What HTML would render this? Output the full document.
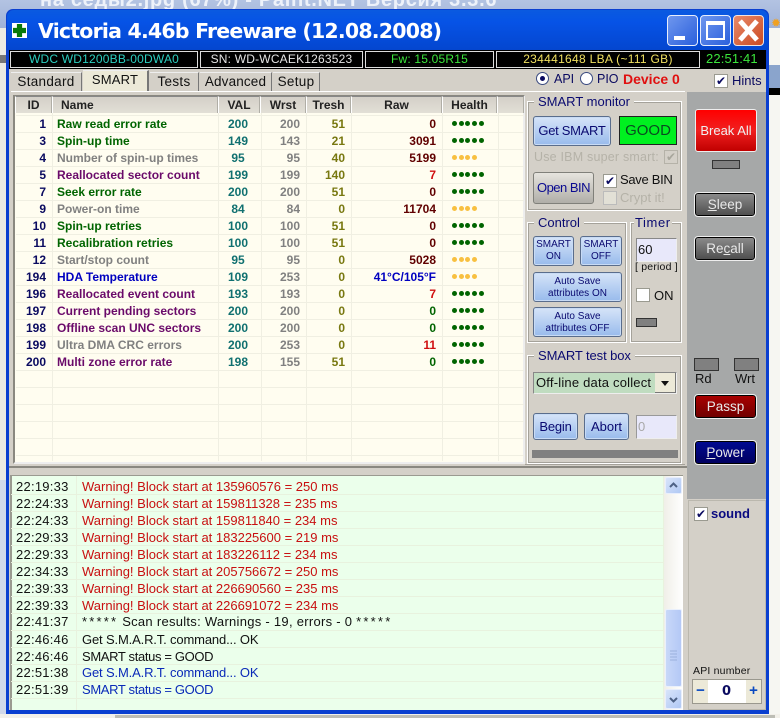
<!DOCTYPE html>
<html><head><meta charset="utf-8"><style>
*{box-sizing:border-box}
html,body{margin:0;padding:0;width:780px;height:718px;overflow:hidden;background:#f2f0ea;font-family:"Liberation Sans",sans-serif}
div,span.a{position:absolute}
.t{position:absolute;white-space:nowrap}
.info{top:51px;height:17px;background:#000;border:1px solid #ddd;font-size:12px;line-height:15px;text-align:center;letter-spacing:.2px}
.tab{top:72px;height:19px;background:#d4d0c8;border-right:1px solid #777;border-top:1px solid #eee;font-size:13.5px;line-height:18px;text-align:center;color:#111;letter-spacing:.3px}
.hc{top:96px;height:17px;background:linear-gradient(#d4d0c8,#e2dfd6);border-right:1px solid #b0aea6;border-left:1px solid #fff;border-top:1px solid #888;font:bold 12px/17px "Liberation Sans",sans-serif;color:#222;text-align:center}
.vl{top:113px;width:1px;height:348px;background:#f0efe2}
.hl{left:16px;width:508px;height:1px;background:#f0efe2}
.r{height:14px;font:bold 12px/14px "Liberation Sans",sans-serif;white-space:nowrap}
.id{left:14px;width:32px;text-align:right;color:#0a0a60}
.nm{left:57px}
.val{left:219px;width:38px;text-align:center;color:#107070}
.wr{left:260px;width:40px;text-align:right;color:#808080}
.tr{left:306px;width:39px;text-align:right;color:#787810}
.rw{left:352px;width:84px;text-align:right;color:#600000}
.hg{left:452px;letter-spacing:0;font:bold 11px/14px "DejaVu Sans",sans-serif}
.d{display:inline-block;width:5px;height:5px;border-radius:50%;margin-right:1.7px;vertical-align:1px}
.g .d{background:#006400}.y .d{background:#f8c040}
.grp{border:1px solid #fff;outline:1px solid #a5a29a;outline-offset:-2px}
.lbl{position:absolute;background:#d4d0c8;color:#0a0a70;font-size:13px;padding:0 4px;white-space:nowrap}
.bb{border:1px solid #5a6d8c;border-radius:3px;background:linear-gradient(#d6e4f8,#98bbec);color:#0a0a70;text-align:center;white-space:nowrap;box-shadow:inset 0 0 0 1px #c8dbf5}
.gb{border:1px solid #000;border-radius:3px;outline:1px solid #eee;background:linear-gradient(#8a8a8a,#4f4f4f);color:#e8e8e8;text-align:center;font-size:13.5px;line-height:28px}
.cb{width:14px;height:14px;background:#fff;border:1px solid #9a9a90;color:#0a0a60;font:bold 12px/12px "DejaVu Sans",sans-serif;text-align:center}
.led{background:#808080;border:1px solid #333}
.lt{left:16px;font-size:13px;line-height:16px;color:#111;letter-spacing:.25px;white-space:nowrap}
.lm{left:82px;font-size:13px;line-height:16px;white-space:nowrap}
.ll{left:11px;width:652px;height:1px;background:#e8f2de}
</style></head><body>
<!-- background desktop -->
<div style="left:0;top:0;width:780px;height:28px;background:linear-gradient(#b3c3e2,#9fb2d8)"></div>
<div class="t" style="left:40px;top:-11px;font-size:20px;font-weight:bold;color:#eef2fa;letter-spacing:.7px;font-family:'Liberation Sans','Noto Sans CJK SC',sans-serif">на седы2.jpg (67%) - Paint.NET Версия 3.3.6</div>
<div style="left:0;top:28px;width:7px;height:690px;background:#ecebe3"></div>
<div style="left:0;top:55px;width:7px;height:8px;background:#777"></div>
<div style="left:0;top:480px;width:7px;height:238px;background:#d0d8ea"></div>
<div style="left:769px;top:28px;width:11px;height:690px;background:#f6f6f2"></div>
<div style="left:769px;top:65px;width:11px;height:23px;background:#8aa4cc"></div>
<div style="left:769px;top:88px;width:11px;height:7px;background:#000"></div>
<div class="t" style="left:771px;top:16px;color:#f0a020;font-size:12px">✹</div>
<div style="left:0;top:714px;width:780px;height:4px;background:#f2f0ea"></div>
<div style="left:115px;top:715px;width:660px;height:3px;background:#bdbdb5"></div>

<!-- window -->
<div style="left:6px;top:9px;width:763px;height:705px;background:#0a3fd0;border-radius:7px 7px 0 0"></div>
<div style="left:7px;top:10px;width:761px;height:40px;background:linear-gradient(#0a5ae0,#0653e6 30%,#0446cf);border-radius:7px 7px 0 0"></div>
<div style="left:12px;top:23px;width:15px;height:15px;background:#fff"></div>
<div style="left:13px;top:24px;width:13px;height:13px;background:#0a7a0a;clip-path:polygon(30% 0,70% 0,70% 30%,100% 30%,100% 70%,70% 70%,70% 100%,30% 100%,30% 70%,0 70%,0 30%,30% 30%)"></div>
<div class="t" id="title" style="left:38px;top:17px;font:bold 20.5px/28px 'DejaVu Sans',sans-serif;color:#fff;letter-spacing:-.8px">Victoria 4.46b Freeware (12.08.2008)</div>
<!-- window buttons -->
<div style="left:667px;top:15px;width:31px;height:31px;background:linear-gradient(135deg,#6f97ee,#2a5fdc);border:1px solid #e8eefc;border-radius:4px"></div>
<div style="left:674px;top:36px;width:11px;height:4px;background:#fff"></div>
<div style="left:700px;top:15px;width:31px;height:31px;background:linear-gradient(135deg,#6f97ee,#2a5fdc);border:1px solid #e8eefc;border-radius:4px"></div>
<div style="left:706px;top:21px;width:19px;height:19px;border:2px solid #fff;border-top-width:4px"></div>
<div style="left:733px;top:15px;width:31px;height:31px;background:linear-gradient(135deg,#e88a6a,#cc4a22);border:1px solid #f0e4e0;border-radius:4px"></div>
<svg style="position:absolute;left:733px;top:15px" width="31" height="31"><path d="M7 6L24 25M24 6L7 25" stroke="#fff" stroke-width="5"/></svg>

<!-- main area -->
<div style="left:9px;top:50px;width:757px;height:660px;background:#d4d0c8"></div>
<div style="left:9px;top:50px;width:757px;height:19px;background:#000"></div>
<div class="info" style="left:10px;width:188px;color:#2ccfc0">WDC WD1200BB-00DWA0</div>
<div class="info" style="left:200px;width:163px;color:#e4e4e4">SN: WD-WCAEK1263523</div>
<div class="info" style="left:365px;width:129px;color:#3ce63c">Fw: 15.05R15</div>
<div class="info" style="left:496px;width:204px;color:#f0e060;letter-spacing:.3px">234441648 LBA (~111 GB)</div>
<div class="t" style="left:706px;top:51px;font-size:13px;line-height:16px;color:#3ce63c;letter-spacing:.15px">22:51:41</div>

<!-- tabs -->
<div class="tab" style="left:11px;width:71px">Standard</div>
<div class="tab" style="left:83px;top:70px;height:21px;width:66px;background:#ece9d8;line-height:18px;color:#111;border-right:2px solid #777;font-size:13px;letter-spacing:.2px">SMART</div>
<div class="tab" style="left:150px;width:49px">Tests</div>
<div class="tab" style="left:200px;width:72px;letter-spacing:.15px">Advanced</div>
<div class="tab" style="left:273px;width:47px">Setup</div>
<div style="left:11px;top:91px;width:674px;height:1px;background:#fff"></div>
<!-- radio row -->
<div style="left:536px;top:72px;width:13px;height:13px;border-radius:50%;background:#fff;border:1px solid #3a4a80"></div>
<div style="left:540px;top:76px;width:5px;height:5px;border-radius:50%;background:#0a0a60"></div>
<div class="t" style="left:554px;top:71px;font-size:12.5px;line-height:16px;color:#0a0a60">API</div>
<div style="left:580px;top:72px;width:13px;height:13px;border-radius:50%;background:#fff;border:1px solid #3a4a80"></div>
<div class="t" style="left:597px;top:71px;font-size:12.5px;line-height:16px;color:#0a0a60">PIO</div>
<div class="t" style="left:623px;top:70px;font-size:14px;line-height:18px;font-weight:bold;color:#e01010">Device 0</div>
<div class="cb" style="left:714px;top:74px">✔</div>
<div class="t" style="left:732px;top:73px;font-size:13px;line-height:16px;color:#0a0a60">Hints</div>

<!-- table -->
<div style="left:13px;top:95px;width:512px;height:369px;background:#fffdf0;border:2px solid #8a8880;border-bottom-color:#eee;border-right-color:#eee"></div>
<div class="hc" style="left:15px;width:37px">ID</div>
<div class="hc" style="left:52px;width:166px;text-align:left;padding-left:8px">Name</div>
<div class="hc" style="left:218px;width:42px">VAL</div>
<div class="hc" style="left:260px;width:46px">Wrst</div>
<div class="hc" style="left:306px;width:45px">Tresh</div>
<div class="hc" style="left:351px;width:91px">Raw</div>
<div class="hc" style="left:442px;width:55px">Health</div>
<div class="hc" style="left:497px;width:27px"></div>
<div class="vl" style="left:52px"></div><div class="vl" style="left:218px"></div><div class="vl" style="left:261px"></div><div class="vl" style="left:306px"></div><div class="vl" style="left:351px"></div><div class="vl" style="left:442px"></div><div class="vl" style="left:498px"></div>
<div class="hl" style="top:115px"></div><div class="hl" style="top:132px"></div><div class="hl" style="top:149px"></div><div class="hl" style="top:166px"></div><div class="hl" style="top:183px"></div><div class="hl" style="top:200px"></div><div class="hl" style="top:217px"></div><div class="hl" style="top:234px"></div><div class="hl" style="top:251px"></div><div class="hl" style="top:268px"></div><div class="hl" style="top:285px"></div><div class="hl" style="top:302px"></div><div class="hl" style="top:319px"></div><div class="hl" style="top:336px"></div><div class="hl" style="top:353px"></div><div class="hl" style="top:370px"></div><div class="hl" style="top:387px"></div><div class="hl" style="top:404px"></div><div class="hl" style="top:421px"></div><div class="hl" style="top:438px"></div><div class="hl" style="top:455px"></div>

<div class="r id" style="top:117px">1</div><div class="r nm" style="top:117px;color:#006400">Raw read error rate</div><div class="r val" style="top:117px">200</div><div class="r wr" style="top:117px">200</div><div class="r tr" style="top:117px">51</div><div class="r rw" style="top:117px">0</div><div class="r hg g" style="top:117px"><i class="d"></i><i class="d"></i><i class="d"></i><i class="d"></i><i class="d"></i></div>
<div class="r id" style="top:134px">3</div><div class="r nm" style="top:134px;color:#006400">Spin-up time</div><div class="r val" style="top:134px">149</div><div class="r wr" style="top:134px">143</div><div class="r tr" style="top:134px">21</div><div class="r rw" style="top:134px">3091</div><div class="r hg g" style="top:134px"><i class="d"></i><i class="d"></i><i class="d"></i><i class="d"></i><i class="d"></i></div>
<div class="r id" style="top:151px">4</div><div class="r nm" style="top:151px;color:#808080">Number of spin-up times</div><div class="r val" style="top:151px">95</div><div class="r wr" style="top:151px">95</div><div class="r tr" style="top:151px">40</div><div class="r rw" style="top:151px">5199</div><div class="r hg y" style="top:151px"><i class="d"></i><i class="d"></i><i class="d"></i><i class="d"></i></div>
<div class="r id" style="top:168px">5</div><div class="r nm" style="top:168px;color:#6a0a6a">Reallocated sector count</div><div class="r val" style="top:168px">199</div><div class="r wr" style="top:168px">199</div><div class="r tr" style="top:168px">140</div><div class="r rw" style="top:168px;color:#d01010">7</div><div class="r hg g" style="top:168px"><i class="d"></i><i class="d"></i><i class="d"></i><i class="d"></i><i class="d"></i></div>
<div class="r id" style="top:185px">7</div><div class="r nm" style="top:185px;color:#006400">Seek error rate</div><div class="r val" style="top:185px">200</div><div class="r wr" style="top:185px">200</div><div class="r tr" style="top:185px">51</div><div class="r rw" style="top:185px">0</div><div class="r hg g" style="top:185px"><i class="d"></i><i class="d"></i><i class="d"></i><i class="d"></i><i class="d"></i></div>
<div class="r id" style="top:202px">9</div><div class="r nm" style="top:202px;color:#808080">Power-on time</div><div class="r val" style="top:202px">84</div><div class="r wr" style="top:202px">84</div><div class="r tr" style="top:202px">0</div><div class="r rw" style="top:202px">11704</div><div class="r hg y" style="top:202px"><i class="d"></i><i class="d"></i><i class="d"></i><i class="d"></i></div>
<div class="r id" style="top:219px">10</div><div class="r nm" style="top:219px;color:#006400">Spin-up retries</div><div class="r val" style="top:219px">100</div><div class="r wr" style="top:219px">100</div><div class="r tr" style="top:219px">51</div><div class="r rw" style="top:219px">0</div><div class="r hg g" style="top:219px"><i class="d"></i><i class="d"></i><i class="d"></i><i class="d"></i><i class="d"></i></div>
<div class="r id" style="top:236px">11</div><div class="r nm" style="top:236px;color:#006400">Recalibration retries</div><div class="r val" style="top:236px">100</div><div class="r wr" style="top:236px">100</div><div class="r tr" style="top:236px">51</div><div class="r rw" style="top:236px">0</div><div class="r hg g" style="top:236px"><i class="d"></i><i class="d"></i><i class="d"></i><i class="d"></i><i class="d"></i></div>
<div class="r id" style="top:253px">12</div><div class="r nm" style="top:253px;color:#808080">Start/stop count</div><div class="r val" style="top:253px">95</div><div class="r wr" style="top:253px">95</div><div class="r tr" style="top:253px">0</div><div class="r rw" style="top:253px">5028</div><div class="r hg y" style="top:253px"><i class="d"></i><i class="d"></i><i class="d"></i><i class="d"></i></div>
<div class="r id" style="top:270px">194</div><div class="r nm" style="top:270px;color:#0000c0">HDA Temperature</div><div class="r val" style="top:270px">109</div><div class="r wr" style="top:270px">253</div><div class="r tr" style="top:270px">0</div><div class="r rw" style="top:270px;color:#0000c0">41°C/105°F</div><div class="r hg y" style="top:270px"><i class="d"></i><i class="d"></i><i class="d"></i><i class="d"></i></div>
<div class="r id" style="top:287px">196</div><div class="r nm" style="top:287px;color:#6a0a6a">Reallocated event count</div><div class="r val" style="top:287px">193</div><div class="r wr" style="top:287px">193</div><div class="r tr" style="top:287px">0</div><div class="r rw" style="top:287px;color:#d01010">7</div><div class="r hg g" style="top:287px"><i class="d"></i><i class="d"></i><i class="d"></i><i class="d"></i><i class="d"></i></div>
<div class="r id" style="top:304px">197</div><div class="r nm" style="top:304px;color:#6a0a6a">Current pending sectors</div><div class="r val" style="top:304px">200</div><div class="r wr" style="top:304px">200</div><div class="r tr" style="top:304px">0</div><div class="r rw" style="top:304px;color:#006400">0</div><div class="r hg g" style="top:304px"><i class="d"></i><i class="d"></i><i class="d"></i><i class="d"></i><i class="d"></i></div>
<div class="r id" style="top:321px">198</div><div class="r nm" style="top:321px;color:#6a0a6a">Offline scan UNC sectors</div><div class="r val" style="top:321px">200</div><div class="r wr" style="top:321px">200</div><div class="r tr" style="top:321px">0</div><div class="r rw" style="top:321px;color:#006400">0</div><div class="r hg g" style="top:321px"><i class="d"></i><i class="d"></i><i class="d"></i><i class="d"></i><i class="d"></i></div>
<div class="r id" style="top:338px">199</div><div class="r nm" style="top:338px;color:#808080">Ultra DMA CRC errors</div><div class="r val" style="top:338px">200</div><div class="r wr" style="top:338px">253</div><div class="r tr" style="top:338px">0</div><div class="r rw" style="top:338px;color:#d01010">11</div><div class="r hg g" style="top:338px"><i class="d"></i><i class="d"></i><i class="d"></i><i class="d"></i><i class="d"></i></div>
<div class="r id" style="top:355px">200</div><div class="r nm" style="top:355px;color:#6a0a6a">Multi zone error rate</div><div class="r val" style="top:355px">198</div><div class="r wr" style="top:355px">155</div><div class="r tr" style="top:355px">51</div><div class="r rw" style="top:355px;color:#006400">0</div><div class="r hg g" style="top:355px"><i class="d"></i><i class="d"></i><i class="d"></i><i class="d"></i><i class="d"></i></div>

<!-- SMART monitor -->
<div class="grp" style="left:527px;top:101px;width:155px;height:110px"></div>
<div class="lbl" style="left:534px;top:94px;line-height:16px">SMART monitor</div>
<div class="bb" style="left:533px;top:116px;width:78px;height:30px;font-size:13px;line-height:27px;letter-spacing:-.3px">Get SMART</div>
<div style="left:619px;top:116px;width:58px;height:29px;background:#00f020;border:1px solid #222;color:#0a4a20;font-size:15px;line-height:27px;text-align:center">GOOD</div>
<div class="t" style="left:534px;top:149px;font-size:12.5px;line-height:16px;color:#b5b2a8;letter-spacing:.2px">Use IBM super smart:</div>
<div class="cb" style="left:664px;top:150px;background:#d4d0c8;color:#a8a69c;border-color:#b5b2a8">✔</div>
<div class="gb" style="left:533px;top:172px;width:61px;height:32px;background:linear-gradient(#e6e4de,#b0aea8);color:#0a0a90;outline:none;border-color:#80807a;font-size:13px;line-height:30px;letter-spacing:-.5px">Open BIN</div>
<div class="cb" style="left:603px;top:174px">✔</div>
<div class="t" style="left:620px;top:172px;font-size:13px;line-height:16px;color:#111;letter-spacing:-.3px">Save BIN</div>
<div class="cb" style="left:603px;top:191px;background:#e2e0d6;border-color:#bbb"></div>
<div class="t" style="left:620px;top:190px;font-size:13px;line-height:16px;color:#b5b2a8">Crypt it!</div>

<!-- Control -->
<div class="grp" style="left:527px;top:222px;width:100px;height:121px"></div>
<div class="lbl" style="left:534px;top:215px;line-height:16px">Control</div>
<div class="bb" style="left:533px;top:236px;width:41px;height:30px;font-size:10px;line-height:12px;padding-top:2px">SMART<br>ON</div>
<div class="bb" style="left:580px;top:236px;width:42px;height:30px;font-size:10px;line-height:12px;padding-top:2px">SMART<br>OFF</div>
<div class="bb" style="left:533px;top:272px;width:89px;height:30px;font-size:10px;line-height:12px;padding-top:3px">Auto Save<br>attributes ON</div>
<div class="bb" style="left:533px;top:307px;width:89px;height:30px;font-size:10px;line-height:12px;padding-top:3px">Auto Save<br>attributes OFF</div>

<!-- Timer -->
<div class="grp" style="left:630px;top:222px;width:52px;height:121px"></div>
<div class="lbl" style="left:634px;top:215px;line-height:16px;padding:0 1px;letter-spacing:.6px">Timer</div>
<div style="left:636px;top:238px;width:41px;height:24px;background:#e8e8fa;border:1px solid #888;border-right-color:#eee;border-bottom-color:#eee;font-size:13px;line-height:22px;padding-left:1px;color:#111">60</div>
<div class="t" style="left:635px;top:261px;font-size:10.5px;line-height:13px;color:#111;letter-spacing:.2px">[ period ]</div>
<div class="cb" style="left:636px;top:288px"></div>
<div class="t" style="left:654px;top:288px;font-size:13px;line-height:16px;color:#111">ON</div>
<div class="led" style="left:636px;top:318px;width:21px;height:9px"></div>

<!-- SMART test box -->
<div class="grp" style="left:527px;top:355px;width:155px;height:109px"></div>
<div class="lbl" style="left:534px;top:348px;line-height:16px;letter-spacing:-.1px">SMART test box</div>
<div style="left:533px;top:372px;width:144px;height:22px;background:#c0dcc0;border:1px solid #888;border-right-color:#eee;border-bottom-color:#eee;font-size:13px;line-height:20px;padding-left:2px;color:#111;letter-spacing:.2px">Off-line data collect</div>
<div style="left:655px;top:373px;width:21px;height:20px;background:#ece9d8;border-right:1px solid #777;border-bottom:1px solid #777"></div>
<div style="left:661px;top:381px;width:0;height:0;border:4px solid transparent;border-top:5px solid #111"></div>
<div class="bb" style="left:533px;top:413px;width:45px;height:27px;font-size:13px;line-height:25px;letter-spacing:-.2px">Begin</div>
<div class="bb" style="left:584px;top:413px;width:45px;height:27px;font-size:13px;line-height:25px">Abort</div>
<div style="left:636px;top:415px;width:41px;height:24px;background:#e8e8fa;border:1px solid #999;border-right-color:#eee;border-bottom-color:#eee;font-size:13px;line-height:22px;padding-left:1px;color:#a8a8a8">0</div>
<div style="left:532px;top:450px;width:146px;height:8px;background:#808080"></div>
<div style="left:525px;top:464px;width:160px;height:1px;background:#a5a29a"></div>

<!-- Right gray panel -->
<div style="left:687px;top:92px;width:79px;height:407px;background:#a6a8a8"></div>
<div style="left:695px;top:109px;width:62px;height:43px;background:linear-gradient(#f00,#f02020 50%,#c00000);border:1px solid #eee;border-radius:3px;color:#f0f0f0;text-align:center;font-size:13px;line-height:41px">Break All</div>
<div class="led" style="left:712px;top:160px;width:28px;height:9px"></div>
<div class="gb" style="left:695px;top:193px;width:60px;height:23px;line-height:22px"><u>S</u>leep</div>
<div class="gb" style="left:695px;top:237px;width:60px;height:23px;line-height:22px">Re<u>c</u>all</div>
<div class="led" style="left:694px;top:358px;width:25px;height:13px"></div>
<div class="led" style="left:734px;top:358px;width:25px;height:13px"></div>
<div class="t" style="left:695px;top:371px;font-size:13px;line-height:16px;color:#111">Rd</div>
<div class="t" style="left:735px;top:371px;font-size:13px;line-height:16px;color:#111">Wrt</div>
<div class="gb" style="left:695px;top:395px;width:61px;height:23px;line-height:21px;background:linear-gradient(#a80000,#700000)">Passp</div>
<div class="gb" style="left:695px;top:441px;width:61px;height:23px;line-height:21px;background:linear-gradient(#000a90,#000060)"><u>P</u>ower</div>

<!-- Lower right -->
<div style="left:688px;top:500px;width:78px;height:210px;background:#d4d0c8;border:1px solid #bbb8ae"></div>
<div class="cb" style="left:694px;top:507px">✔</div>
<div class="t" style="left:711px;top:506px;font-size:13px;line-height:16px;font-weight:bold;color:#0a0a80">sound</div>
<div class="t" style="left:693px;top:665px;font-size:10.5px;line-height:13px;color:#111;letter-spacing:.2px">API number</div>
<div style="left:692px;top:679px;width:70px;height:25px;background:#fff;border:1px solid #9a988e"></div>
<div style="left:693px;top:680px;width:15px;height:23px;background:#ece9d8;color:#0a4ac0;font:bold 15px/21px 'Liberation Sans',sans-serif;text-align:center">−</div>
<div style="left:746px;top:680px;width:15px;height:23px;background:#ece9d8;color:#0a4ac0;font:bold 15px/21px 'Liberation Sans',sans-serif;text-align:center">+</div>
<div class="t" style="left:722px;top:684px;font:bold 13px/16px 'DejaVu Sans',sans-serif;color:#0a0a60">0</div>

<!-- Log -->
<div style="left:9px;top:466px;width:678px;height:9px;background:#d4d0c8;border-top:2px solid #8a8880"></div>
<div style="left:10px;top:475px;width:673px;height:235px;background:#ebffeb;border-left:2px solid #9a9a90;border-top:1px solid #9a9a90"></div>
<div style="left:76px;top:476px;width:1px;height:234px;background:#e8f2de"></div>
<div style="left:663px;top:476px;width:1px;height:234px;background:#e8f2de"></div>
<div class="ll" style="top:494px"></div><div class="ll" style="top:511px"></div><div class="ll" style="top:528px"></div><div class="ll" style="top:545px"></div><div class="ll" style="top:562px"></div><div class="ll" style="top:579px"></div><div class="ll" style="top:596px"></div><div class="ll" style="top:613px"></div><div class="ll" style="top:630px"></div><div class="ll" style="top:647px"></div><div class="ll" style="top:664px"></div><div class="ll" style="top:681px"></div><div class="ll" style="top:698px"></div>

<div class="lt" style="top:479px">22:19:33</div><div class="lm" style="top:479px;color:#c81010">Warning! Block start at 135960576 = 250 ms</div>
<div class="lt" style="top:496px">22:24:33</div><div class="lm" style="top:496px;color:#c81010">Warning! Block start at 159811328 = 235 ms</div>
<div class="lt" style="top:513px">22:24:33</div><div class="lm" style="top:513px;color:#c81010">Warning! Block start at 159811840 = 234 ms</div>
<div class="lt" style="top:530px">22:29:33</div><div class="lm" style="top:530px;color:#c81010">Warning! Block start at 183225600 = 219 ms</div>
<div class="lt" style="top:547px">22:29:33</div><div class="lm" style="top:547px;color:#c81010">Warning! Block start at 183226112 = 234 ms</div>
<div class="lt" style="top:564px">22:34:33</div><div class="lm" style="top:564px;color:#c81010">Warning! Block start at 205756672 = 250 ms</div>
<div class="lt" style="top:581px">22:39:33</div><div class="lm" style="top:581px;color:#c81010">Warning! Block start at 226690560 = 235 ms</div>
<div class="lt" style="top:598px">22:39:33</div><div class="lm" style="top:598px;color:#c81010">Warning! Block start at 226691072 = 234 ms</div>
<div class="lt" style="top:614px">22:41:37</div><div class="lm" style="top:614px;color:#111;letter-spacing:.28px"><span style="letter-spacing:2.2px">*****</span> Scan results: Warnings - 19, errors - 0 <span style="letter-spacing:2.2px">*****</span></div>
<div class="lt" style="top:632px">22:46:46</div><div class="lm" style="top:632px;color:#111;letter-spacing:-.15px">Get S.M.A.R.T. command... OK</div>
<div class="lt" style="top:649px">22:46:46</div><div class="lm" style="top:649px;color:#111;letter-spacing:-.35px">SMART status = GOOD</div>
<div class="lt" style="top:665px">22:51:38</div><div class="lm" style="top:665px;color:#0a2ab8;letter-spacing:-.15px">Get S.M.A.R.T. command... OK</div>
<div class="lt" style="top:682px">22:51:39</div><div class="lm" style="top:682px;color:#0a2ab8;letter-spacing:-.35px">SMART status = GOOD</div>

<!-- Scrollbar -->
<div style="left:664px;top:476px;width:19px;height:234px;background:linear-gradient(90deg,#f0efe8,#fff)"></div>
<div style="left:665px;top:477px;width:17px;height:17px;background:linear-gradient(135deg,#d8e4fa,#b0c8f4);border:1px solid #e8eefc;border-radius:2px"></div>
<svg style="position:absolute;left:665px;top:477px" width="17" height="17"><path d="M5 10L8.5 6.5L12 10" fill="none" stroke="#4d6185" stroke-width="2"/></svg>
<div style="left:665px;top:609px;width:17px;height:78px;background:linear-gradient(90deg,#c8d8f8,#b4c8f6);border:1px solid #eaf0fc;border-radius:2px"></div>
<svg style="position:absolute;left:665px;top:609px" width="17" height="78"><path d="M5 42H12M5 45H12M5 48H12M5 51H12" stroke="#9ab0dc" stroke-width="1"/></svg>
<div style="left:665px;top:689px;width:17px;height:20px;background:linear-gradient(135deg,#d8e4fa,#b0c8f4);border:1px solid #e8eefc;border-radius:2px"></div>
<svg style="position:absolute;left:665px;top:689px" width="17" height="20"><path d="M5 9L8.5 12.5L12 9" fill="none" stroke="#4d6185" stroke-width="2"/></svg>
</body></html>
